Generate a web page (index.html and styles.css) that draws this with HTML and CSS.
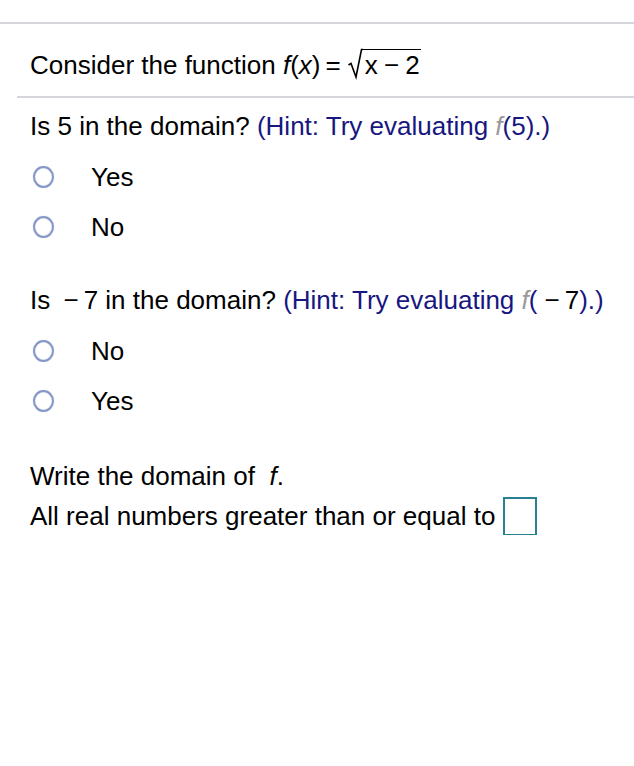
FILE: index.html
```html
<!DOCTYPE html>
<html>
<head>
<meta charset="utf-8">
<link rel="stylesheet" href="styles.css">
</head>
<body>
<div class="page">
  <div class="rule-top"></div>
  <div class="stem">Consider the function <i>f</i>(<i>x</i>)<span class="eq">=</span><span class="sqrt"><svg class="radical" width="15" height="32" viewBox="0 0 15 32"><path d="M0.5 17 L3 15.5 L8 29 L13.5 1.5 L15 1.5" fill="none" stroke="#000" stroke-width="1.6" stroke-linejoin="miter"/></svg><span class="radicand">x − 2</span></span></div>
  <div class="rule-mid"></div>
  <div class="question q1">Is 5 in the domain? <span class="hint">(Hint: Try evaluating <i class="fgrey">f</i>(5).)</span></div>
  <div class="options">
    <label class="opt"><span class="radio"></span><span class="lbl">Yes</span></label>
    <label class="opt"><span class="radio"></span><span class="lbl">No</span></label>
  </div>
  <div class="question q2">Is <span class="neg"><span class="minus">−</span>7</span> in the domain? <span class="hint">(Hint: Try evaluating <i class="fgrey">f</i>(<span class="neg in"><span class="minus">−</span>7</span>).)</span></div>
  <div class="options">
    <label class="opt"><span class="radio"></span><span class="lbl">No</span></label>
    <label class="opt"><span class="radio"></span><span class="lbl">Yes</span></label>
  </div>
  <div class="domain">Write the domain of &nbsp;<i>f</i>.</div>
  <div class="answer">All real numbers greater than or equal to <span class="box"></span></div>
</div>
</body>
</html>
```
FILE: styles.css
```css
html, body {
  margin: 0;
  padding: 0;
  background: #fff;
}
body {
  font-family: "Liberation Sans", Arial, sans-serif;
  color: #000;
  font-size: 26px;
}
.page {
  padding-top: 22px;
}
.rule-top {
  height: 2px;
  background: #d4d6db;
}
.stem {
  padding: 26px 0 16px 30px;
  height: 30px;
  line-height: 30px;
  display: flex;
  align-items: center;
  white-space: pre;
}
.stem i { font-style: italic; }
.eq {
  margin: 0 7px 0 5px;
}
.sqrt {
  display: inline-flex;
  align-items: flex-start;
  margin-top: -2px;
}
.radical {
  display: block;
  flex: none;
}
.radicand {
  display: inline-block;
  border-top: 1.6px solid #000;
  margin-top: 1px;
  padding: 0 2px 0 2px;
  line-height: 30px;
  letter-spacing: -0.5px;
}
.rule-mid {
  margin-left: 17px;
  height: 2px;
  background: #d4d6db;
}
.question {
  line-height: 30px;
  padding-left: 30px;
}
.q1 { padding-top: 13px; }
.q2 { padding-top: 33px; }
.neg {
  color: #000;
  margin-left: 6px;
}
.neg.in { margin-left: 7px; }
.minus { margin-right: 5px; }
.hint { color: #17177f; }
.fgrey { color: #9a9a9a; }
.options {
  display: flex;
  flex-direction: column;
  padding-top: 11px;
}
.opt {
  display: flex;
  align-items: center;
  height: 50px;
  padding-left: 33px;
}
.radio {
  width: 17px;
  height: 18px;
  border: 2.5px solid #8597c6;
  border-radius: 50%;
  box-shadow: 0 0 1px #a9b5d6, inset 0 0 1px #a9b5d6;
  margin-right: 37px;
  flex: none;
}
.lbl { line-height: 30px; }
.domain {
  padding: 35px 0 0 30px;
  line-height: 30px;
}
.answer {
  padding: 6px 0 0 30px;
  height: 38px;
  display: flex;
  align-items: center;
}
.box {
  display: inline-block;
  width: 30px;
  height: 35px;
  border: 2px solid #2a7f92;
  margin-left: 8px;
}
```
